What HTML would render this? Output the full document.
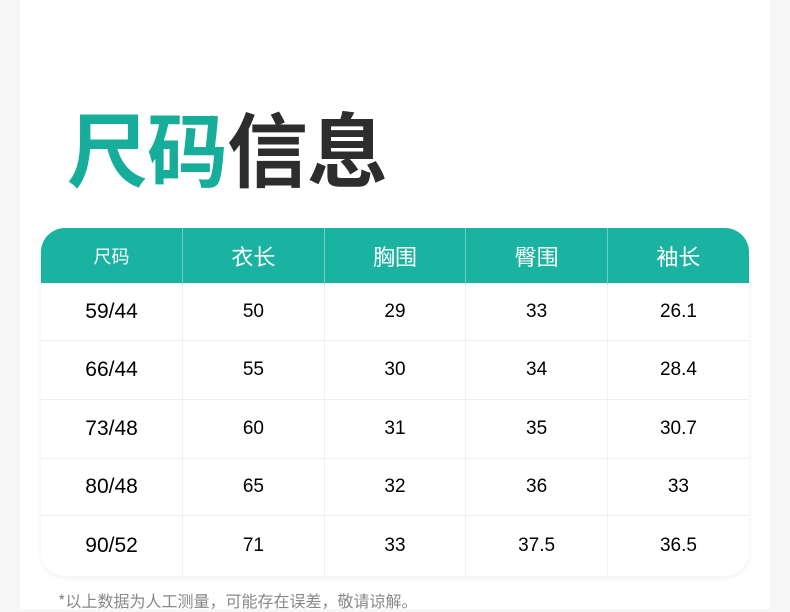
<!DOCTYPE html>
<html><head><meta charset="utf-8"><style>
body{margin:0;width:790px;height:609px;background:#f6f6f6;font-family:"Liberation Sans","Noto Sans CJK SC",sans-serif;overflow:hidden;position:relative}
.card{position:absolute;left:20px;top:0;width:750px;height:609px;background:#fff}
.title{position:absolute;left:67px;top:97px;font-size:81px;font-weight:bold;line-height:100px;letter-spacing:-1px;font-family:"Noto Sans CJK SC",sans-serif}
.title .g{color:#17ad9b}.title .d{color:#2d2d2d}
table{position:absolute;left:41px;top:228px;width:708px;border-collapse:collapse;table-layout:fixed;border-radius:24px;overflow:hidden;box-shadow:0 2px 6px rgba(0,0,0,0.06)}
th{background:#1ab2a0;color:#fff;font-weight:normal;height:55px;padding:0;font-size:22px;border-left:1px solid #6fcfc3;font-family:"Noto Sans CJK SC",sans-serif}
th:first-child{border-left:none;font-size:18px}
td{text-align:center;font-size:19px;color:#000;padding:0;border-left:1px solid #f0f0f0;border-top:1px solid #f0f0f0}
td:first-child{border-left:none;font-size:21px}
.note{position:absolute;left:58px;top:588px;font-size:16px;color:#888;font-family:"Noto Sans CJK SC",sans-serif;line-height:24px}
</style></head><body>
<div class="card"></div>
<div class="title"><span class="g">尺码</span><span class="d">信息</span></div>
<table>
<tr><th>尺码</th><th>衣长</th><th>胸围</th><th>臀围</th><th>袖长</th></tr>
<tr style="height:57px"><td>59/44</td><td>50</td><td>29</td><td>33</td><td>26.1</td></tr>
<tr style="height:59px"><td>66/44</td><td>55</td><td>30</td><td>34</td><td>28.4</td></tr>
<tr style="height:59px"><td>73/48</td><td>60</td><td>31</td><td>35</td><td>30.7</td></tr>
<tr style="height:57px"><td>80/48</td><td>65</td><td>32</td><td>36</td><td>33</td></tr>
<tr style="height:60px"><td>90/52</td><td>71</td><td>33</td><td>37.5</td><td>36.5</td></tr>
</table>
<div class="note">*以上数据为人工测量，可能存在误差，敬请谅解。</div>
</body></html>
